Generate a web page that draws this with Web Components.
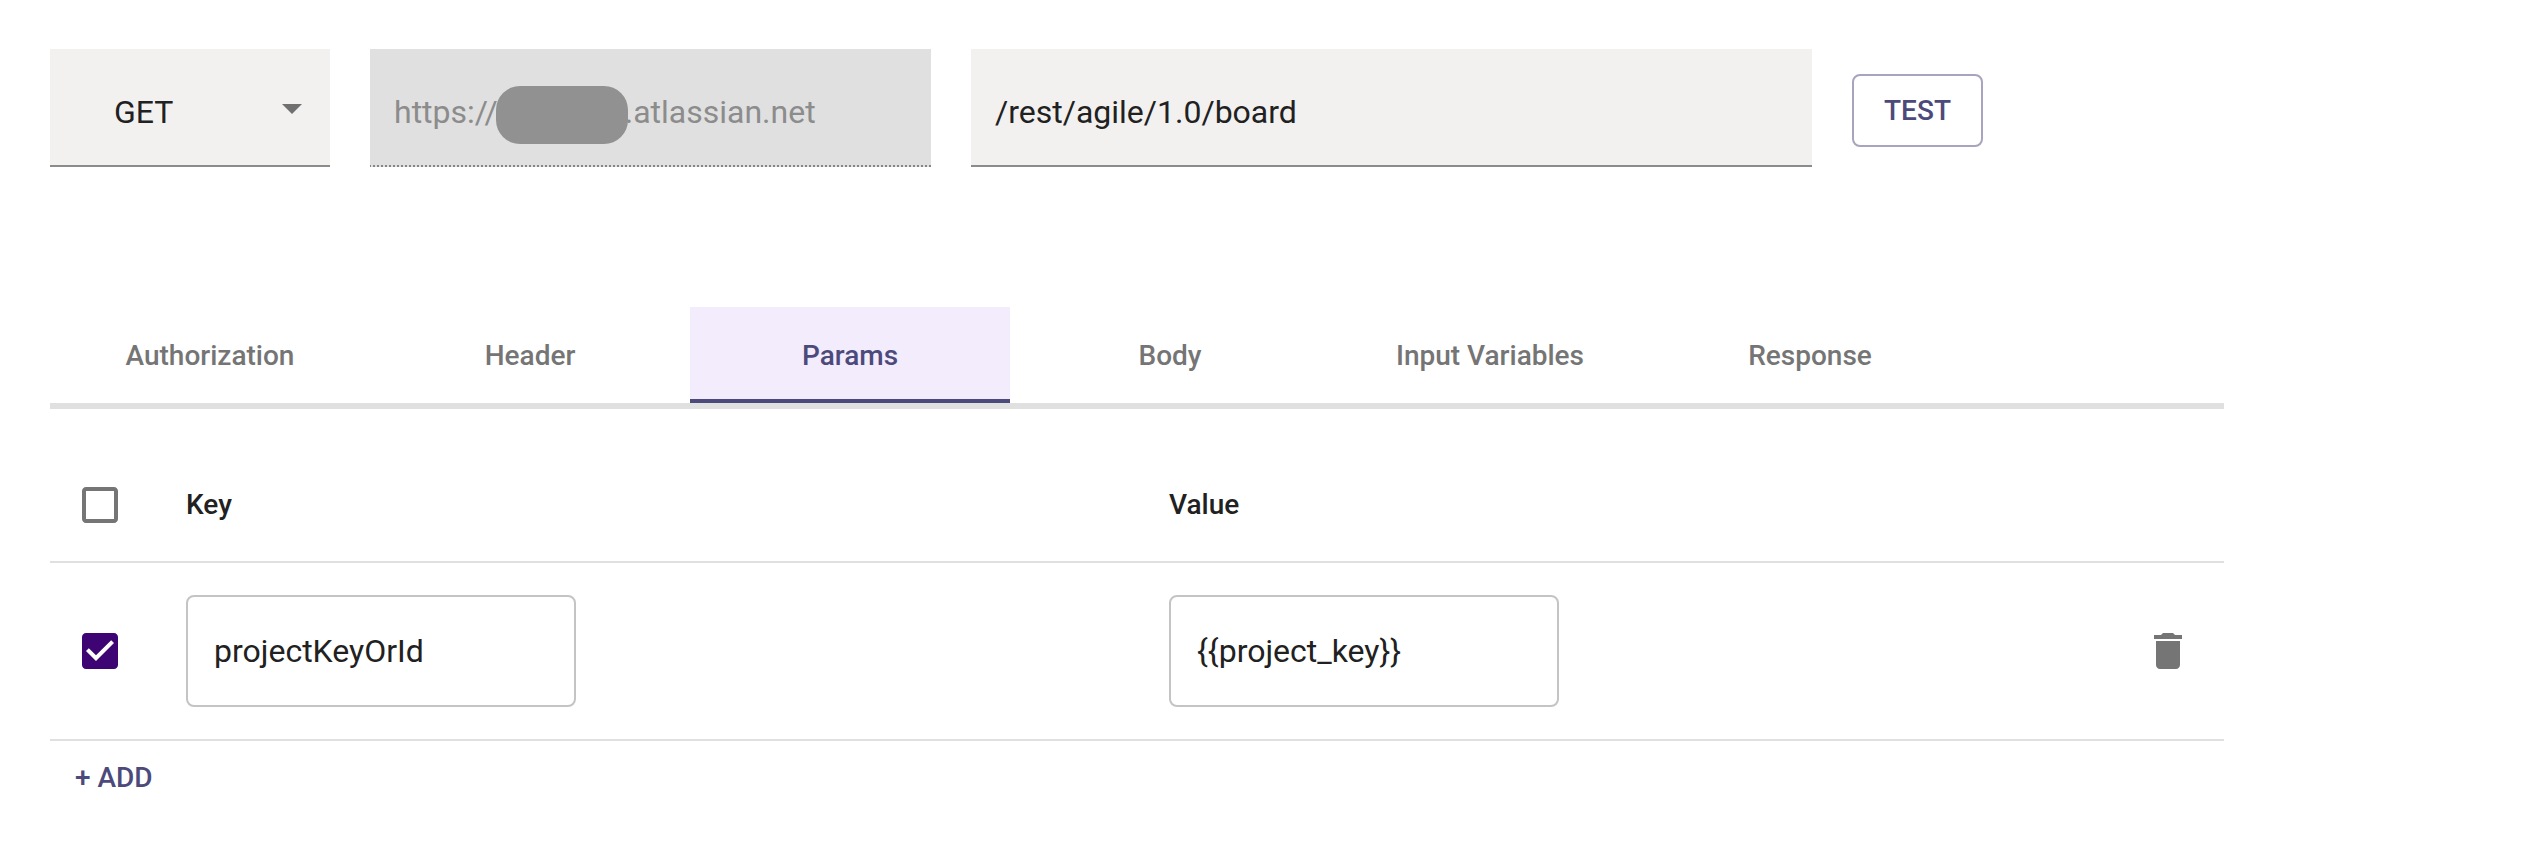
<!DOCTYPE html>
<html lang="en">
<head>
<meta charset="utf-8">
<title>API request</title>
<style>
body { margin: 0; background: #fff; font-family: Roboto, "Liberation Sans", sans-serif; color: #212121; }
</style>
</head>
<body>
<request-editor></request-editor>
<script>
const define = (name, html, setup) => customElements.define(name, class extends HTMLElement {
  connectedCallback() {
    if (this.shadowRoot) return;
    this.attachShadow({ mode: 'open' }).innerHTML = html;
    if (setup) setup(this, this.shadowRoot);
  }
});

define('filled-field', `
<style>
:host { display: flex; align-items: center; box-sizing: border-box; height: 118px; padding: 10px 24px 0; background: #f3f1f0; border-bottom: 2px solid #8c8b8b; font-size: 32px; line-height: 38px; white-space: pre; }
:host([disabled]) { color: #8c8c8c; border-bottom: 0; padding-bottom: 2px; background: repeating-linear-gradient(90deg, #868686 0 1px, #e0e0e0 1px 3px, #868686 3px 4px) bottom / 100% 2px no-repeat, #e0e0e0; }
:host([select]) { padding-left: 64px; padding-right: 14px; justify-content: space-between; }
svg { display: none; width: 48px; height: 48px; margin-top: -8px; fill: #707070; }
:host([select]) svg { display: block; }
</style>
<span><slot></slot></span><svg viewBox="0 0 24 24"><path d="M7 10l5 5 5-5z"/></svg>`);

define('redacted-host', `
<style>
:host { display: flex; align-items: center; }
i { width: 132px; height: 58px; border-radius: 24px; background: #919191; margin: 6px -3px 0 -2px; z-index: 1; }
</style>
<span>https://</span><i></i><span>.atlassian.net</span>`);

define('outline-button', `
<style>
:host { display: flex; align-items: center; justify-content: center; box-sizing: border-box; width: 131px; height: 73px; border: 2px solid #a6a4bf; border-radius: 8px; color: #4c4a7b; font-size: 28px; font-weight: 500; line-height: 33px; }
</style>
<slot></slot>`);

define('tab-item', `
<style>
:host { display: flex; align-items: center; justify-content: center; box-sizing: border-box; width: 320px; height: 96px; padding-top: 5px; border-bottom: 4px solid transparent; color: #757575; font-size: 28px; font-weight: 500; line-height: 33px; }
:host([active]) { color: #4c4a7b; background: #f3ecfd; border-color: #4c4a7b; }
</style>
<slot></slot>`);

define('tab-bar', `
<style>:host { display: flex; border-bottom: 6px solid #e0e0e0; }</style>
<slot></slot>`);

define('check-box', `
<style>
:host { display: block; width: 48px; height: 48px; }
svg { display: block; width: 48px; height: 48px; fill: #757575; }
:host([checked]) svg { fill: #3f0474; }
</style>
<svg viewBox="0 0 24 24"><path/></svg>`, (host, root) => {
  root.querySelector('path').setAttribute('d', host.hasAttribute('checked')
    ? 'M19 3H5c-1.11 0-2 .9-2 2v14c0 1.1.89 2 2 2h14c1.11 0 2-.9 2-2V5c0-1.1-.89-2-2-2zm-9 14l-5-5 1.41-1.41L10 14.17l7.59-7.59L19 8l-9 9z'
    : 'M19 5v14H5V5h14m0-2H5c-1.1 0-2 .9-2 2v14c0 1.1.9 2 2 2h14c1.1 0 2-.9 2-2V5c0-1.1-.9-2-2-2z');
});

define('outlined-input', `
<style>
:host { display: flex; align-items: center; box-sizing: border-box; width: 390px; height: 112px; padding: 0 26px; border: 2px solid #c4c4c4; border-radius: 8px; font-size: 32px; line-height: 38px; }
</style>
<slot></slot>`);

define('delete-icon', `
<style>:host, svg { display: block; width: 48px; height: 48px; fill: #757575; }</style>
<svg viewBox="0 0 24 24"><path d="M6 19c0 1.1.9 2 2 2h8c1.1 0 2-.9 2-2V7H6v12zM19 4h-3.5l-1-1h-5l-1 1H5v2h14V4z"/></svg>`);

define('param-row', `
<style>
:host { display: grid; grid-template-columns: 110px 983px 975px 48px; align-items: center; box-sizing: border-box; height: 178px; padding-left: 26px; border-bottom: 2px solid #e0e0e0; }
:host([head]) { height: 154px; padding-top: 72px; align-items: start; font-size: 28px; font-weight: 500; line-height: 48px; }
</style>
<slot></slot>`);

define('text-button', `
<style>:host { display: block; padding: 20px 25px; color: #4c4a7b; font-size: 28px; font-weight: 500; line-height: 33px; }</style>
<slot></slot>`);

define('request-editor', `
<style>
:host { display: block; box-sizing: border-box; width: 2224px; padding: 49px 0 0 50px; }
.request { display: grid; grid-template-columns: 280px 561px 841px 131px; column-gap: 40px; margin-bottom: 140px; }
outline-button { margin-top: 25px; }
</style>
<div class="request">
  <filled-field select>GET</filled-field>
  <filled-field disabled><redacted-host></redacted-host></filled-field>
  <filled-field>/rest/agile/1.0/board</filled-field>
  <outline-button>TEST</outline-button>
</div>
<tab-bar>
  <tab-item>Authorization</tab-item>
  <tab-item>Header</tab-item>
  <tab-item active>Params</tab-item>
  <tab-item>Body</tab-item>
  <tab-item>Input Variables</tab-item>
  <tab-item>Response</tab-item>
</tab-bar>
<param-row head><check-box></check-box><span>Key</span><span>Value</span></param-row>
<param-row><check-box checked></check-box><outlined-input>projectKeyOrId</outlined-input><outlined-input>{{project_key}}</outlined-input><delete-icon></delete-icon></param-row>
<text-button>+ ADD</text-button>`);
</script>
</body>
</html>
